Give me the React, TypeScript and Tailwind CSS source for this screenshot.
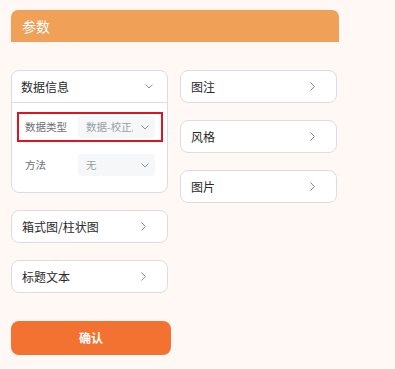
import React from "react";

const ChevronDown = () => (
  <svg width="8" height="5" viewBox="0 0 8 5" fill="none">
    <path d="M0.5 0.5 L4 4 L7.5 0.5" stroke="#8a94a6" strokeWidth="1" />
  </svg>
);

const ChevronRight = () => (
  <svg width="5" height="9" viewBox="0 0 5 9" fill="none">
    <path d="M0.5 0.5 L4.3 4.5 L0.5 8.5" stroke="#7d86a0" strokeWidth="1" />
  </svg>
);

const NavCard = ({ label }: { label: string }) => (
  <div className="flex h-[33px] w-[157px] items-center justify-between rounded-[8px] border border-[#dcdde3] bg-white pl-[10px] pr-[21px]">
    <span className="text-[12px] text-[#2a2a2a]">{label}</span>
    <ChevronRight />
  </div>
);

const Select = ({ value }: { value: string }) => (
  <div className="flex h-[22px] w-[77px] items-center justify-between rounded-[3px] bg-[#f5f7f9] pl-[8px] pr-[6px]">
    <span className="w-[47px] overflow-hidden whitespace-nowrap text-[10.5px] text-[#9a9fa7]">{value}</span>
    <ChevronDown />
  </div>
);

export default function App() {
  return (
    <div
      className="h-[369px] w-[395px] bg-[#fff8f5] pl-[11px] pt-[10px]"
      style={{ fontFamily: '"Noto Sans CJK SC", "Noto Sans", sans-serif' }}
    >
      <div className="flex h-[32px] w-[328px] items-center rounded-t-[7px] bg-[#f0a057] pl-[11px] text-[14px] text-white">
        参数
      </div>
      <div className="mt-[28px] flex gap-[9px]">
        <div className="flex w-[160px] flex-col">
          <div className="h-[123px] w-[157px] rounded-[8px] border border-[#dcdde3] bg-white">
            <div className="flex h-[32px] items-center justify-between border-b border-[#dcdde3] pl-[9px] pr-[14px]">
              <span className="text-[12px] text-[#2a2a2a]">数据信息</span>
              <ChevronDown />
            </div>
            <div className="mt-[9px] ml-[5px] flex h-[30px] w-[146px] items-center border-2 border-[#e0141e] pl-[6px]">
              <span className="w-[53px] text-[10.5px] text-[#6b6f76]">数据类型</span>
              <Select value="数据-校正后" />
            </div>
            <div className="mt-[12px] ml-[5px] flex h-[22px] items-center pl-[8px]">
              <span className="w-[53px] text-[10.5px] text-[#6b6f76]">方法</span>
              <Select value="无" />
            </div>
          </div>
          <div className="mt-[17px] flex flex-col gap-[17px]">
            <NavCard label="箱式图/柱状图" />
            <NavCard label="标题文本" />
          </div>
          <div className="mt-[28px] flex h-[34px] w-[160px] items-center justify-center rounded-[8px] bg-[#f47231] text-[12px] font-bold text-white">
            确认
          </div>
        </div>
        <div className="flex flex-col gap-[17px]">
          <NavCard label="图注" />
          <NavCard label="风格" />
          <NavCard label="图片" />
        </div>
      </div>
    </div>
  );
}
